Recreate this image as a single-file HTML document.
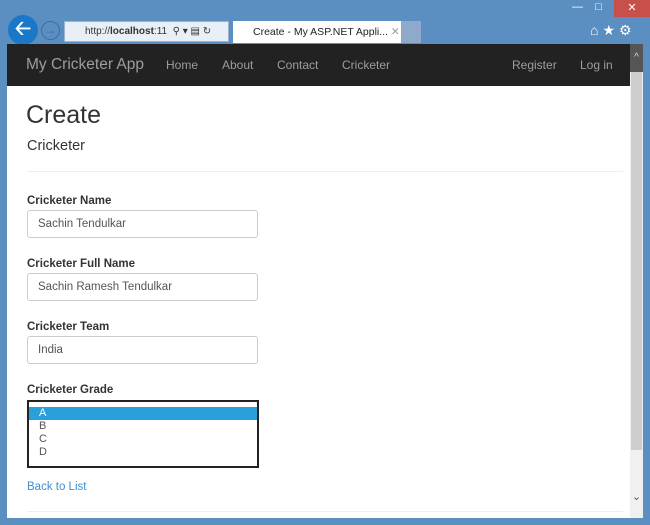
<!DOCTYPE html>
<html><head><style>
body{margin:0;width:650px;height:525px;background:#5b8fc1;font-family:"Liberation Sans",Arial,sans-serif;position:relative;overflow:hidden}
.a{position:absolute}
.nav{left:7px;top:44px;width:623px;height:42px;background:#222}
.nav span{position:absolute;top:14px;color:#9d9d9d;font-size:12px}
.page{left:7px;top:86px;width:623px;height:432px;background:#fff}
.lbl{left:27px;font-size:11.5px;font-weight:bold;color:#333}
.inp{left:27px;width:231px;height:28px;border:1px solid #ccc;border-radius:3px;background:#fff;font-size:11.5px;color:#555;box-sizing:border-box;padding:7px 10px}
</style></head><body>
<div class="a" style="left:8px;top:15px;width:30px;height:30px;border-radius:50%;background:#1b78c8;color:#fff;font-size:20px;text-align:center;line-height:28px;font-weight:bold">&#129120;</div>
<div class="a" style="left:41px;top:21px;width:19px;height:19px;border-radius:50%;border:1px solid #3a6fa5;color:#3a6fa5;font-size:12px;text-align:center;line-height:17px;box-sizing:border-box">&#8594;</div>
<div class="a" style="left:64px;top:21px;width:165px;height:21px;background:#e9eff6;border:1px solid #9bb5d0;box-sizing:border-box;font-size:10px;line-height:19px;padding-left:20px;color:#333">http://<b>localhost</b>:11&nbsp; &#9906; &#9662; &#9636; &#8635;</div>
<div class="a" style="left:233px;top:21px;width:168px;height:22px;background:#fff;font-size:10.5px;line-height:22px;padding-left:20px;box-sizing:border-box;color:#222">Create - My ASP.NET Appli... <span style="color:#999">&#10005;</span></div>
<div class="a" style="left:401px;top:21px;width:20px;height:22px;background:#8ea9c9"></div>
<div class="a" style="left:614px;top:0;width:36px;height:17px;background:#c7504b;color:#fff;font-size:11px;text-align:center;line-height:17px">&#10005;</div>
<div class="a" style="left:572px;top:1px;color:#fff;font-size:11px">&#8212;&nbsp;&nbsp;&nbsp;&nbsp;&#9633;</div>
<div class="a" style="left:590px;top:22px;color:#fff;font-size:14px;letter-spacing:4px">&#8962;&#9733;&#9881;</div>
<div class="a nav">
<span style="left:19px;top:12px;font-size:15.5px">My Cricketer App</span>
<span style="left:159px">Home</span>
<span style="left:215px">About</span>
<span style="left:270px">Contact</span>
<span style="left:335px">Cricketer</span>
<span style="left:505px">Register</span>
<span style="left:573px">Log in</span>
</div>
<div class="a" style="left:630px;top:44px;width:13px;height:474px;background:#f0f0f0"></div>
<div class="a" style="left:630px;top:44px;width:13px;height:28px;background:#555;color:#ddd;font-size:10px;text-align:center;line-height:28px">^</div>
<div class="a" style="left:631px;top:72px;width:11px;height:378px;background:#cdcdcd"></div>
<div class="a" style="left:630px;top:490px;width:13px;color:#555;font-size:11px;text-align:center">&#8964;</div>
<div class="a page">
<div class="a" style="left:19px;top:15px;font-size:25px;color:#333">Create</div>
<div class="a" style="left:20px;top:52px;font-size:14.5px;color:#333">Cricketer</div>
<div class="a" style="left:20px;top:85px;width:596px;height:1px;background:#eee"></div>
<div class="a" style="left:20px;top:425px;width:596px;height:1px;background:#eee"></div>
</div>
<div class="a lbl" style="top:195px">Cricketer Name</div>
<div class="a inp" style="top:210px">Sachin Tendulkar</div>
<div class="a lbl" style="top:258px">Cricketer Full Name</div>
<div class="a inp" style="top:273px">Sachin Ramesh Tendulkar</div>
<div class="a lbl" style="top:321px">Cricketer Team</div>
<div class="a inp" style="top:336px">India</div>
<div class="a lbl" style="top:384px">Cricketer Grade</div>
<div class="a" style="left:27px;top:400px;width:232px;height:68px;border:2px solid #222;box-sizing:border-box;background:#fff;font-size:11px;color:#555">
<div style="margin-top:5px;height:13px;background:#2a9fdb;color:#fff;padding-left:10px;line-height:13px">A</div>
<div style="padding-left:10px;line-height:13px">B</div>
<div style="padding-left:10px;line-height:13px">C</div>
<div style="padding-left:10px;line-height:13px">D</div>
</div>
<div class="a" style="left:27px;top:481px;font-size:11.5px;color:#428bca">Back to List</div>
</body></html>
